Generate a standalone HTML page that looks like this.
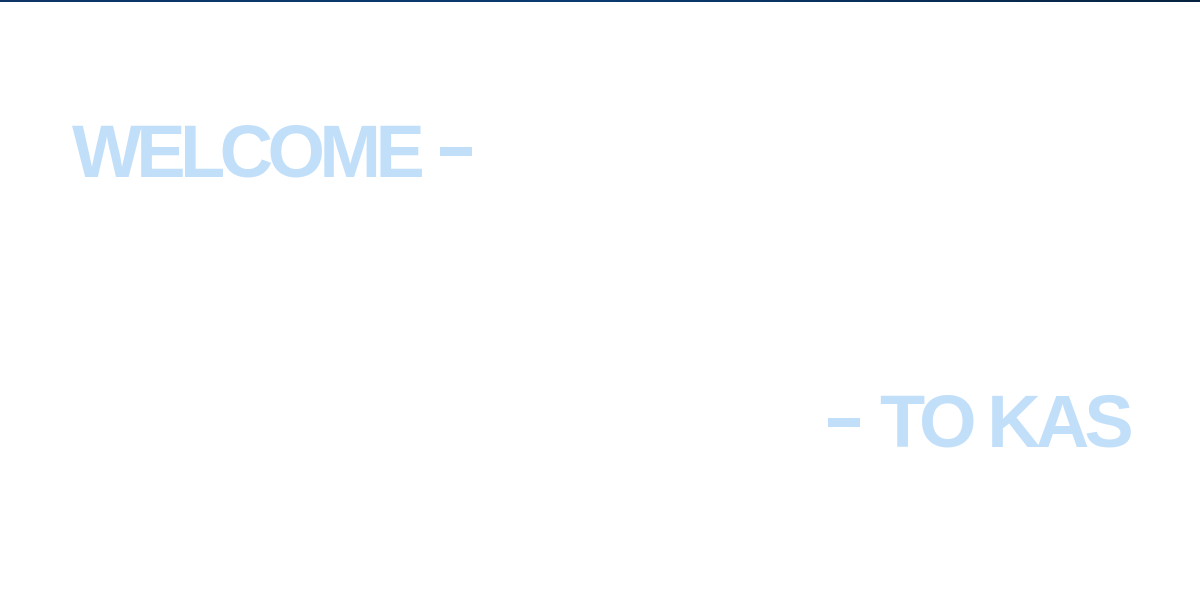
<!DOCTYPE html>
<html><head><style>
html,body{margin:0;padding:0;background:#fff;width:1200px;height:590px;overflow:hidden;position:relative}
.bar{position:absolute;left:0;top:0;width:1200px;height:2px;background:linear-gradient(90deg,#0d3566,#0a3a70 50%,#06223f)}
.t{position:absolute;font-family:"Liberation Sans",sans-serif;font-weight:bold;font-size:74px;line-height:74px;color:#c2dffa;white-space:nowrap}
.d{position:absolute;background:#c2dffa;height:9px}
</style></head><body>
<div class="bar"></div>
<div class="t" style="left:72px;top:115px;letter-spacing:-5.6px">WELCOME</div>
<div class="d" style="left:440px;top:147px;width:32px"></div>
<div class="d" style="left:828px;top:418px;width:32px"></div>
<div class="t" style="left:880px;top:385px;letter-spacing:-4.9px">TO KAS</div>
</body></html>
